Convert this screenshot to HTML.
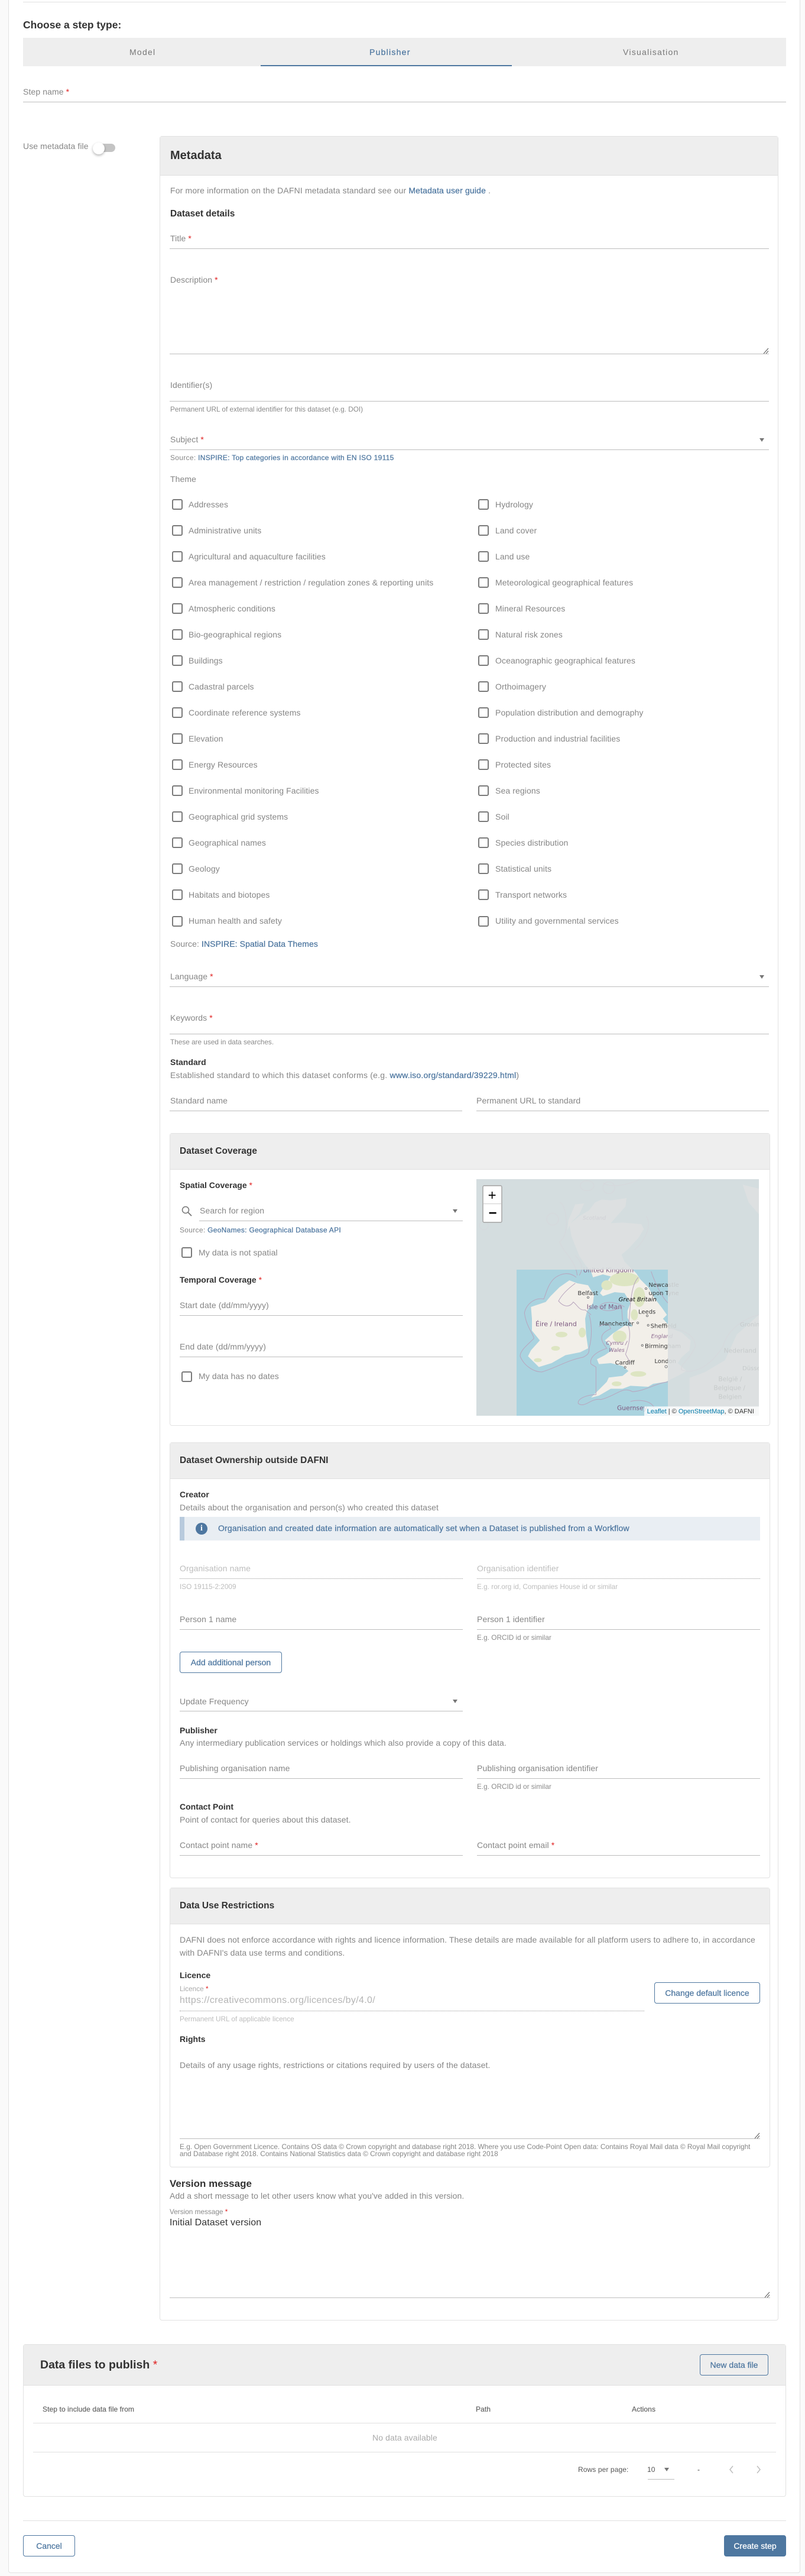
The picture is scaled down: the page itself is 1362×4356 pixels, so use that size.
<!DOCTYPE html>
<html><head><meta charset="utf-8"><title>Choose a step type</title>
<style>
html,body{margin:0;padding:0;background:#fafafa}
body{position:relative;width:1362px;height:4356px;overflow:hidden;font-family:"Liberation Sans",Arial,sans-serif}
.t{position:absolute;white-space:nowrap;line-height:20px;font-size:14px;color:#868686;letter-spacing:.1px}
.b{color:#333;font-weight:bold;letter-spacing:0}
.h{font-size:15.500px;font-weight:bold;color:#333;letter-spacing:0}
.c{font-size:11.800px;color:#8a8a8a;letter-spacing:0}
.d{color:#bdbdbd}
.a{color:#4e77a0;-webkit-text-stroke:.25px #4e77a0}
i{font-style:normal;color:#e02020}
.l{position:absolute;height:1px;background:#bdbdbd}
.o{position:absolute;height:0;border-top:1px dotted #999}
.card{position:absolute;background:#fff;border:1px solid #e2e2e2;border-radius:4px;box-sizing:border-box}
.hd{position:absolute;background:#eee;border-bottom:1px solid #e0e0e0;box-sizing:border-box}
.x{position:absolute;width:18px;height:18px;box-sizing:border-box;border:2px solid #7a7a7a;border-radius:3px;background:#fff}
.v{position:absolute;width:0;height:0;border-left:4px solid transparent;border-right:4px solid transparent;border-top:6px solid #757575}
.btn{position:absolute;box-sizing:border-box;height:36px;border:1px solid #4e77a0;border-radius:4px;background:#fff;color:#4e77a0;font-size:14px;line-height:34px;text-align:center;white-space:nowrap;-webkit-text-stroke:.25px #4e77a0}
.rz{position:absolute;width:10px;height:10px}
</style></head>
<body>
<div class="card" style="left:14px;top:-10px;width:1340px;height:4361px"></div>
<div class="l" style="left:39px;top:3px;width:1291px;background:#e0e0e0"></div>
<div class="t b" style="left:39px;top:32px;font-size:17.500px">Choose a step type:</div>

<div style="position:absolute;left:39px;top:64px;width:1291px;height:48px;background:#eee"></div>
<div style="position:absolute;left:441px;top:110px;width:425px;height:2px;background:#4e77a0"></div>
<div class="t" style="left:219px;top:78px;letter-spacing:1.250px;color:#777">Model</div>
<div class="t a" style="left:625px;top:78px;letter-spacing:1.250px">Publisher</div>
<div class="t" style="left:1054px;top:78px;letter-spacing:1.250px;color:#777">Visualisation</div>

<div class="t" style="left:39px;top:145px">Step name <i>*</i></div>
<div class="l" style="left:39px;top:172px;width:1291px"></div>

<div class="t" style="left:39px;top:237px">Use metadata file</div>
<div style="position:absolute;left:160px;top:243px;width:35px;height:14px;border-radius:7px;background:#c4c4c4"></div>
<div style="position:absolute;left:157px;top:241px;width:20px;height:20px;border-radius:50%;background:#fff;box-shadow:0 2px 4px rgba(0,0,0,.3)"></div>

<!-- Metadata card -->
<div class="card" style="left:270px;top:230px;width:1047px;height:3694px"></div>
<div class="hd" style="left:271px;top:231px;width:1045px;height:66px"></div>
<div class="t b" style="left:288px;top:253px;font-size:20px">Metadata</div>
<div class="t" style="left:288px;top:312px;letter-spacing:.16px">For more information on the DAFNI metadata standard see our <span class="a">Metadata user guide</span> .</div>
<div class="t h" style="left:288px;top:352px">Dataset details</div>
<div class="t" style="left:288px;top:393px">Title <i>*</i></div>
<div class="l" style="left:287px;top:420px;width:1014px"></div>
<div class="t" style="left:288px;top:463px">Description <i>*</i></div>
<div class="l" style="left:287px;top:598px;width:1014px"></div>
<svg class="rz" style="left:1291px;top:588px" viewBox="0 0 10 10"><path d="M1 10L9 1M5 10L9 5.500" stroke="#555" stroke-width="1" fill="none"/></svg>
<div class="t" style="left:288px;top:641px">Identifier(s)</div>
<div class="l" style="left:287px;top:678px;width:1014px"></div>
<div class="t c" style="left:288px;top:682px">Permanent URL of external identifier for this dataset (e.g. DOI)</div>
<div class="t" style="left:288px;top:733px">Subject <i>*</i></div>
<div class="v" style="left:1285px;top:741px"></div>
<div class="l" style="left:287px;top:760px;width:1014px"></div>
<div class="t" style="left:288px;top:764px;font-size:12px;letter-spacing:.3px">Source: <span class="a">INSPIRE: Top categories in accordance with EN ISO 19115</span></div>
<div class="t" style="left:288px;top:800px">Theme</div>

<div class="x" style="left:291px;top:844px"></div><div class="t" style="left:319px;top:843px">Addresses</div>
<div class="x" style="left:809px;top:844px"></div><div class="t" style="left:838px;top:843px">Hydrology</div>
<div class="x" style="left:291px;top:888px"></div><div class="t" style="left:319px;top:887px">Administrative units</div>
<div class="x" style="left:809px;top:888px"></div><div class="t" style="left:838px;top:887px">Land cover</div>
<div class="x" style="left:291px;top:932px"></div><div class="t" style="left:319px;top:931px">Agricultural and aquaculture facilities</div>
<div class="x" style="left:809px;top:932px"></div><div class="t" style="left:838px;top:931px">Land use</div>
<div class="x" style="left:291px;top:976px"></div><div class="t" style="left:319px;top:975px">Area management / restriction / regulation zones &amp; reporting units</div>
<div class="x" style="left:809px;top:976px"></div><div class="t" style="left:838px;top:975px">Meteorological geographical features</div>
<div class="x" style="left:291px;top:1020px"></div><div class="t" style="left:319px;top:1019px">Atmospheric conditions</div>
<div class="x" style="left:809px;top:1020px"></div><div class="t" style="left:838px;top:1019px">Mineral Resources</div>
<div class="x" style="left:291px;top:1064px"></div><div class="t" style="left:319px;top:1063px">Bio-geographical regions</div>
<div class="x" style="left:809px;top:1064px"></div><div class="t" style="left:838px;top:1063px">Natural risk zones</div>
<div class="x" style="left:291px;top:1108px"></div><div class="t" style="left:319px;top:1107px">Buildings</div>
<div class="x" style="left:809px;top:1108px"></div><div class="t" style="left:838px;top:1107px">Oceanographic geographical features</div>
<div class="x" style="left:291px;top:1152px"></div><div class="t" style="left:319px;top:1151px">Cadastral parcels</div>
<div class="x" style="left:809px;top:1152px"></div><div class="t" style="left:838px;top:1151px">Orthoimagery</div>
<div class="x" style="left:291px;top:1196px"></div><div class="t" style="left:319px;top:1195px">Coordinate reference systems</div>
<div class="x" style="left:809px;top:1196px"></div><div class="t" style="left:838px;top:1195px">Population distribution and demography</div>
<div class="x" style="left:291px;top:1240px"></div><div class="t" style="left:319px;top:1239px">Elevation</div>
<div class="x" style="left:809px;top:1240px"></div><div class="t" style="left:838px;top:1239px">Production and industrial facilities</div>
<div class="x" style="left:291px;top:1284px"></div><div class="t" style="left:319px;top:1283px">Energy Resources</div>
<div class="x" style="left:809px;top:1284px"></div><div class="t" style="left:838px;top:1283px">Protected sites</div>
<div class="x" style="left:291px;top:1328px"></div><div class="t" style="left:319px;top:1327px">Environmental monitoring Facilities</div>
<div class="x" style="left:809px;top:1328px"></div><div class="t" style="left:838px;top:1327px">Sea regions</div>
<div class="x" style="left:291px;top:1372px"></div><div class="t" style="left:319px;top:1371px">Geographical grid systems</div>
<div class="x" style="left:809px;top:1372px"></div><div class="t" style="left:838px;top:1371px">Soil</div>
<div class="x" style="left:291px;top:1416px"></div><div class="t" style="left:319px;top:1415px">Geographical names</div>
<div class="x" style="left:809px;top:1416px"></div><div class="t" style="left:838px;top:1415px">Species distribution</div>
<div class="x" style="left:291px;top:1460px"></div><div class="t" style="left:319px;top:1459px">Geology</div>
<div class="x" style="left:809px;top:1460px"></div><div class="t" style="left:838px;top:1459px">Statistical units</div>
<div class="x" style="left:291px;top:1504px"></div><div class="t" style="left:319px;top:1503px">Habitats and biotopes</div>
<div class="x" style="left:809px;top:1504px"></div><div class="t" style="left:838px;top:1503px">Transport networks</div>
<div class="x" style="left:291px;top:1549px"></div><div class="t" style="left:319px;top:1547px">Human health and safety</div>
<div class="x" style="left:809px;top:1549px"></div><div class="t" style="left:838px;top:1547px">Utility and governmental services</div>

<div class="t" style="left:288px;top:1586px">Source: <span class="a">INSPIRE: Spatial Data Themes</span></div>
<div class="t" style="left:288px;top:1641px">Language <i>*</i></div>
<div class="v" style="left:1285px;top:1649px"></div>
<div class="l" style="left:287px;top:1668px;width:1014px"></div>
<div class="t" style="left:288px;top:1711px">Keywords <i>*</i></div>
<div class="l" style="left:287px;top:1748px;width:1014px"></div>
<div class="t c" style="left:288px;top:1752px">These are used in data searches.</div>
<div class="t b" style="left:288px;top:1786px">Standard</div>
<div class="t" style="left:288px;top:1808px;letter-spacing:.22px">Established standard to which this dataset conforms (e.g. <span class="a">www.iso.org/standard/39229.html</span>)</div>
<div class="t" style="left:288px;top:1851px">Standard name</div>
<div class="l" style="left:287px;top:1878px;width:495px"></div>
<div class="t" style="left:806px;top:1851px">Permanent URL to standard</div>
<div class="l" style="left:806px;top:1878px;width:495px"></div>

<!-- Dataset Coverage -->
<div class="card" style="left:287px;top:1916px;width:1016px;height:495px"></div>
<div class="hd" style="left:288px;top:1917px;width:1014px;height:61px"></div>
<div class="t h" style="left:304px;top:1937px">Dataset Coverage</div>
<div class="t b" style="left:304px;top:1994px">Spatial Coverage <i style="font-weight:normal">*</i></div>
<svg style="position:absolute;left:306px;top:2039px" width="20" height="18" viewBox="0 0 20 18"><circle cx="8" cy="7" r="5.500" fill="none" stroke="#757575" stroke-width="1.500"/><path d="M12 11L18 17" stroke="#757575" stroke-width="1.800"/></svg>
<div class="t" style="left:338px;top:2037px">Search for region</div>
<div class="v" style="left:766px;top:2045px"></div>
<div class="l" style="left:337px;top:2064px;width:446px"></div>
<div class="t" style="left:304px;top:2070px;font-size:12px;letter-spacing:.3px">Source: <span class="a">GeoNames: Geographical Database API</span></div>
<div class="x" style="left:307px;top:2109px"></div>
<div class="t" style="left:336px;top:2108px">My data is not spatial</div>
<div class="t b" style="left:304px;top:2154px">Temporal Coverage <i style="font-weight:normal">*</i></div>
<div class="t" style="left:304px;top:2197px">Start date (dd/mm/yyyy)</div>
<div class="l" style="left:304px;top:2224px;width:479px"></div>
<div class="t" style="left:304px;top:2267px">End date (dd/mm/yyyy)</div>
<div class="l" style="left:304px;top:2294px;width:479px"></div>
<div class="x" style="left:307px;top:2319px"></div>
<div class="t" style="left:336px;top:2317px">My data has no dates</div>

<svg style="position:absolute;left:800px;top:1990px" width="500" height="420" viewBox="0 0 1500 1260">
<defs><clipPath id="m"><rect x="18" y="12" width="1434" height="1200"/></clipPath></defs>
<g clip-path="url(#m)">
<rect x="18" y="12" width="1434" height="1200" fill="#aad3df"/>
<g fill="#f2efe9">
<path d="M655 115L700 120L780 108L775 150L735 195L700 235L760 232L855 240L868 265L840 310L790 365L755 395L770 430L830 490L850 520L890 560L925 620L960 665L985 700L965 720L1010 770L1060 790L1105 830L1100 880L1060 915L1040 945L1085 985L1040 1010L980 1040L915 1050L890 1065L800 1060L760 1075L700 1075L640 1110L600 1120L640 1080L680 1040L690 1018L760 1010L790 985L760 960L700 945L640 950L630 925L670 905L705 880L690 845L670 830L710 795L770 755L810 760L785 715L785 680L800 640L770 590L720 585L660 605L645 590L670 550L700 505L660 495L610 510L600 480L570 445L540 400L520 350L500 300L490 240L540 200L590 170L620 130Z"/>
<path d="M395 605L440 560L490 525L530 540L585 550L615 600L610 640L580 680L570 720L575 800L585 870L545 890L470 905L400 945L335 965L280 910L295 880L340 830L300 780L300 720L295 660L370 635Z"/>
<path d="M520 140L565 135L540 190L500 230L480 270L485 220Z"/>
<path d="M1100 1020L1180 990L1280 930L1340 800L1452 700V1212H1100Z"/>
<path d="M1370 40L1452 60V190L1400 130Z"/>
</g>
<g fill="#dde5c2">
<ellipse cx="770" cy="520" rx="75" ry="35"/><ellipse cx="845" cy="610" rx="30" ry="50"/><ellipse cx="745" cy="810" rx="35" ry="30"/><ellipse cx="680" cy="550" rx="28" ry="25"/><ellipse cx="555" cy="790" rx="18" ry="25"/><ellipse cx="730" cy="1050" rx="25" ry="12"/><ellipse cx="420" cy="870" rx="22" ry="12"/><ellipse cx="330" cy="930" rx="20" ry="10"/><ellipse cx="450" cy="800" rx="30" ry="14"/><ellipse cx="840" cy="1000" rx="40" ry="14"/><ellipse cx="820" cy="700" rx="18" ry="28"/>
</g>
<g fill="none" stroke="#b8a5be" stroke-width="3">
<path d="M525 510C490 480 450 490 420 510C380 540 370 600 360 620C310 610 270 650 262 690C270 760 310 800 310 820C280 850 240 880 240 910C260 960 310 990 350 990C420 970 480 930 560 915C590 900 590 890 590 870C610 800 600 730 590 700"/>
<path d="M520 540C480 570 450 600 435 630C460 660 490 665 510 635C530 650 540 680 570 675L600 700"/>
<path d="M840 510C800 550 800 660 790 760C805 800 790 860 775 900L800 945"/>
<path d="M770 660C700 620 650 640 640 660C650 680 700 690 755 660L760 730"/>
<path d="M640 760C690 735 690 750 700 770C660 790 630 810 680 870C620 890 590 920 600 950L625 965V1105C580 1105 530 1125 535 1150C570 1175 600 1120 650 1130C730 1110 760 1060 810 1090C880 1085 920 1050 990 1040"/>
<path d="M540 500C560 470 560 440 520 400M905 480C925 540 960 610 990 640M800 1140C830 1130 900 1130 920 1170"/>
<path d="M990 770C1090 770 1130 820 1130 860C1100 930 1050 950 1060 980C1120 1000 1200 970 1270 860C1290 780 1370 720 1452 700"/>
<path d="M440 130C470 125 500 290 440 330C470 400 520 420 530 500M660 30C700 60 790 40 850 12M880 200C910 240 880 320 820 370M405 185a30 30 0 1 0 .1 0M56 225a22 22 0 1 0 .1 0M580 20a35 25 0 1 0 .1 0M690 25a30 30 0 1 0 .1 0"/>
</g>
<g font-family="'DejaVu Sans',sans-serif" font-size="30" fill="#3a3a3a">
<text x="560" y="484" font-size="32" fill="#7d5a80">United Kingdom</text>
<text x="892" y="558">Newcastle</text>
<text x="892" y="600">upon Tyne</text>
<text x="532" y="600">Belfast</text>
<text x="740" y="632" font-style="italic" fill="#111">Great Britain</text>
<text x="578" y="671" font-size="33" fill="#7d5a80">Isle of Man</text>
<text x="840" y="694">Leeds</text>
<text x="642" y="754">Manchester</text>
<text x="902" y="766">Sheffield</text>
<text x="318" y="757" font-size="33" fill="#7d5a80">Éire / Ireland</text>
<text x="905" y="818" font-size="27" font-style="italic" fill="#8d6a90">England</text>
<text x="676" y="852" font-size="27" font-style="italic" fill="#8d6a90">Cymru /</text>
<text x="690" y="888" font-size="27" font-style="italic" fill="#8d6a90">Wales</text>
<text x="873" y="868">Birmingham</text>
<text x="722" y="953">Cardiff</text>
<text x="922" y="945">London</text>
<text x="732" y="1183" font-size="32" fill="#7d5a80">Guernsey</text>
<text x="558" y="217" font-size="27" font-style="italic" fill="#8d6a90">Scotland</text>
<text x="1356" y="759">Groningen</text>
<text x="1274" y="892" font-size="32">Nederland</text>
<text x="1368" y="981">Düsseldorf</text>
<text x="1246" y="1037" font-size="32">België /</text>
<text x="1222" y="1082" font-size="32">Belgique /</text>
<text x="1246" y="1126" font-size="32">Belgien</text>
</g>
<g fill="#fff" stroke="#555" stroke-width="2.500">
<circle cx="879" cy="567" r="4.500"/><circle cx="585" cy="612" r="4.500"/><circle cx="885" cy="705" r="4.500"/><circle cx="837" cy="741" r="4.500"/><circle cx="890" cy="753" r="4.500"/><circle cx="860" cy="855" r="4.500"/><circle cx="773" cy="966" r="4.500"/><circle cx="981" cy="963" r="6"/>
</g>
<path d="M18 12H1452V1212H990V471H222V1212H18Z" fill="rgb(218,222,223)" fill-opacity=".88"/>
<rect x="870" y="1165" width="582" height="47" fill="#fff" fill-opacity=".8"/>
<text x="884" y="1200" font-family="'Liberation Sans',sans-serif" font-size="33" fill="#333"><tspan fill="#0078a8">Leaflet</tspan> | © <tspan fill="#0078a8">OpenStreetMap</tspan>, © DAFNI</text>
<rect x="51" y="45" width="96" height="186" rx="7" fill="#fff" stroke="#acacac" stroke-width="5"/>
<line x1="53" y1="137" x2="145" y2="137" stroke="#ccc" stroke-width="3"/>
<text x="98" y="117" text-anchor="middle" font-family="'Liberation Sans',sans-serif" font-size="72" fill="#000">+</text>
<text x="101" y="207" text-anchor="middle" font-family="'Liberation Sans',sans-serif" font-weight="bold" font-size="72" fill="#000">−</text>
</g>
</svg>

<!-- Ownership -->
<div class="card" style="left:287px;top:2439px;width:1016px;height:737px"></div>
<div class="hd" style="left:288px;top:2440px;width:1014px;height:61px"></div>
<div class="t h" style="left:304px;top:2460px">Dataset Ownership outside DAFNI</div>
<div class="t b" style="left:304px;top:2517px">Creator</div>
<div class="t" style="left:304px;top:2539px">Details about the organisation and person(s) who created this dataset</div>
<div style="position:absolute;left:304px;top:2565px;width:982px;height:40px;background:#e9eef3"></div>
<div style="position:absolute;left:304px;top:2565px;width:8px;height:40px;background:#b8cadd"></div>
<div style="position:absolute;left:331px;top:2575px;width:20px;height:20px;border-radius:50%;background:#4e77a0;color:#fff;font:bold 14px/20px 'Liberation Serif',serif;text-align:center">i</div>
<div class="t a" style="left:369px;top:2574px;letter-spacing:.17px">Organisation and created date information are automatically set when a Dataset is published from a Workflow</div>
<div class="t d" style="left:304px;top:2642px">Organisation name</div>
<div class="o" style="left:304px;top:2669px;width:479px"></div>
<div class="t c d" style="left:304px;top:2673px">ISO 19115-2:2009</div>
<div class="t d" style="left:807px;top:2642px">Organisation identifier</div>
<div class="o" style="left:807px;top:2669px;width:479px"></div>
<div class="t c d" style="left:807px;top:2673px">E.g. ror.org id, Companies House id or similar</div>
<div class="t" style="left:304px;top:2728px">Person 1 name</div>
<div class="l" style="left:304px;top:2755px;width:479px"></div>
<div class="t" style="left:807px;top:2728px">Person 1 identifier</div>
<div class="l" style="left:807px;top:2755px;width:479px"></div>
<div class="t c" style="left:807px;top:2759px">E.g. ORCID id or similar</div>
<div class="btn" style="left:304px;top:2793px;width:173px">Add additional person</div>
<div class="t" style="left:304px;top:2867px">Update Frequency</div>
<div class="v" style="left:766px;top:2874px"></div>
<div class="l" style="left:304px;top:2893px;width:479px"></div>
<div class="t b" style="left:304px;top:2916px">Publisher</div>
<div class="t" style="left:304px;top:2937px">Any intermediary publication services or holdings which also provide a copy of this data.</div>
<div class="t" style="left:304px;top:2980px">Publishing organisation name</div>
<div class="l" style="left:304px;top:3007px;width:479px"></div>
<div class="t" style="left:807px;top:2980px">Publishing organisation identifier</div>
<div class="l" style="left:807px;top:3007px;width:479px"></div>
<div class="t c" style="left:807px;top:3011px">E.g. ORCID id or similar</div>
<div class="t b" style="left:304px;top:3045px">Contact Point</div>
<div class="t" style="left:304px;top:3067px">Point of contact for queries about this dataset.</div>
<div class="t" style="left:304px;top:3110px">Contact point name <i>*</i></div>
<div class="l" style="left:304px;top:3137px;width:479px"></div>
<div class="t" style="left:807px;top:3110px">Contact point email <i>*</i></div>
<div class="l" style="left:807px;top:3137px;width:479px"></div>

<!-- Data Use -->
<div class="card" style="left:287px;top:3192px;width:1016px;height:473px"></div>
<div class="hd" style="left:288px;top:3193px;width:1014px;height:61px"></div>
<div class="t h" style="left:304px;top:3213px">Data Use Restrictions</div>
<div class="t" style="left:304px;top:3270px">DAFNI does not enforce accordance with rights and licence information. These details are made available for all platform users to adhere to, in accordance</div>
<div class="t" style="left:304px;top:3292px">with DAFNI's data use terms and conditions.</div>
<div class="t b" style="left:304px;top:3330px">Licence</div>
<div class="t c" style="left:304px;top:3353px;color:#aaa">Licence <i>*</i></div>
<div class="t" style="left:304px;top:3373px;font-size:16px;color:#b5b5b5;letter-spacing:.35px">https://creativecommons.org/licences/by/4.0/</div>
<div class="o" style="left:304px;top:3400px;width:786px"></div>
<div class="t c d" style="left:304px;top:3404px">Permanent URL of applicable licence</div>
<div class="btn" style="left:1107px;top:3352px;width:179px">Change default licence</div>
<div class="t b" style="left:304px;top:3438px">Rights</div>
<div class="t" style="left:304px;top:3482px">Details of any usage rights, restrictions or citations required by users of the dataset.</div>
<div class="l" style="left:304px;top:3616px;width:982px"></div>
<svg class="rz" style="left:1276px;top:3606px" viewBox="0 0 10 10"><path d="M1 10L9 1M5 10L9 5.500" stroke="#555" stroke-width="1" fill="none"/></svg>
<div class="t" style="left:304px;top:3624px;font-size:11.850px;line-height:12px;white-space:normal;width:985px;letter-spacing:0">E.g. Open Government Licence. Contains OS data © Crown copyright and database right 2018. Where you use Code-Point Open data: Contains Royal Mail data © Royal Mail copyright and Database right 2018. Contains National Statistics data © Crown copyright and database right 2018</div>

<div class="t h" style="left:287px;top:3683px;font-size:17px">Version message</div>
<div class="t" style="left:287px;top:3703px">Add a short message to let other users know what you've added in this version.</div>
<div class="t c" style="left:287px;top:3730px">Version message <i>*</i></div>
<div class="t" style="left:287px;top:3749px;font-size:16px;color:#333">Initial Dataset version</div>
<div class="l" style="left:287px;top:3885px;width:1016px"></div>
<svg class="rz" style="left:1293px;top:3875px" viewBox="0 0 10 10"><path d="M1 10L9 1M5 10L9 5.500" stroke="#555" stroke-width="1" fill="none"/></svg>

<!-- Data files -->
<div class="card" style="left:39px;top:3964px;width:1291px;height:258px"></div>
<div class="hd" style="left:40px;top:3965px;width:1289px;height:69px"></div>
<div class="t b" style="left:68px;top:3989px;font-size:19.500px">Data files to publish <i style="font-weight:normal">*</i></div>
<div class="btn" style="left:1184px;top:3981px;width:116px;background:#eee">New data file</div>
<div class="t" style="left:72px;top:4064px;font-size:12px;color:#666;-webkit-text-stroke:.2px #666">Step to include data file from</div>
<div class="t" style="left:805px;top:4064px;font-size:12px;color:#666;-webkit-text-stroke:.2px #666">Path</div>
<div class="t" style="left:1069px;top:4064px;font-size:12px;color:#666;-webkit-text-stroke:.2px #666">Actions</div>
<div class="l" style="left:56px;top:4097px;width:1257px;background:#e0e0e0"></div>
<div class="t" style="left:630px;top:4112px;color:#aaa">No data available</div>
<div class="l" style="left:56px;top:4146px;width:1257px;background:#e0e0e0"></div>
<div class="t" style="left:978px;top:4166px;font-size:12px;color:#555">Rows per page:</div>
<div class="t" style="left:1095px;top:4166px;font-size:12px;color:#555">10</div>
<div class="v" style="left:1124px;top:4173px"></div>
<div class="l" style="left:1096px;top:4192px;width:45px"></div>
<div class="t" style="left:1180px;top:4166px;font-size:12px;color:#333">-</div>
<svg style="position:absolute;left:1232px;top:4168px" width="60" height="16" viewBox="0 0 60 16"><path d="M8 2L3 8L8 14M49 2L54 8L49 14" fill="none" stroke="#bdbdbd" stroke-width="1.500"/></svg>

<div class="l" style="left:39px;top:4262px;width:1291px;background:#e0e0e0"></div>
<div class="btn" style="left:39px;top:4287px;width:88px">Cancel</div>
<div class="btn" style="left:1225px;top:4287px;width:105px;background:#4e77a0;color:#fff;-webkit-text-stroke:.25px #fff">Create step</div>
</body></html>
